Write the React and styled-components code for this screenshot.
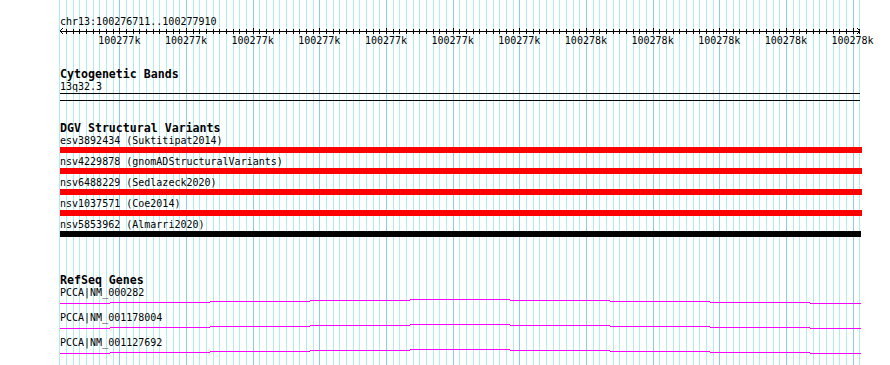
import styled, { createGlobalStyle } from 'styled-components';

const START = 100276711;
const END = 100277910;
const LEFT = 60;
const WIDTH = 800;
const PX_PER_BP = WIDTH / (END - START + 1);

const pxOf = (bp) => LEFT + (bp - START) * PX_PER_BP;

const GlobalStyle = createGlobalStyle`
  html, body {
    margin: 0;
    padding: 0;
    background: #fff;
  }
`;

const Panel = styled.div`
  position: relative;
  width: 890px;
  height: 365px;
  overflow: hidden;
  background: #fff;
  font-family: "DejaVu Sans Mono", monospace;
  color: #000;
`;

const GridLayer = styled.svg`
  position: absolute;
  inset: 0;
  z-index: 0;
`;

const Tracks = styled.div`
  position: relative;
  z-index: 1;
  display: flex;
  flex-direction: column;
  width: ${WIDTH}px;
  padding: 15px 0 0 ${LEFT}px;
`;

const Caption = styled.div`
  font-size: 10px;
  line-height: 13px;
  white-space: pre;
`;

const RulerSvg = styled.svg`
  display: block;
  overflow: visible;
`;

const TickLabels = styled.div`
  display: flex;
  padding-left: ${(p) => p.$offset}px;
`;

const TickLabel = styled.div`
  flex: none;
  width: ${(p) => p.$step}px;
  text-align: center;
  font-size: 10px;
  line-height: 13px;
`;

const Track = styled.section`
  display: flex;
  flex-direction: column;
  margin-top: ${(p) => p.$spacing}px;
`;

const TrackTitle = styled.div`
  font-size: 11.6px;
  font-weight: bold;
  line-height: 12px;
  white-space: pre;
`;

const FeatureLabel = styled.div`
  font-size: 10px;
  line-height: 13px;
  white-space: pre;
`;

const Band = styled.div`
  width: ${WIDTH}px;
  height: 6px;
  border-top: 1px solid #000;
  border-bottom: 1px solid #000;
`;

const VariantList = styled.div`
  display: flex;
  flex-direction: column;
  gap: 2px;
`;

const VariantBar = styled.div`
  width: ${(p) => p.$width}px;
  height: 6px;
  background: ${(p) => p.$color};
`;

const GeneSvg = styled.svg`
  display: block;
  overflow: visible;
`;

const minorBps = [];
for (let bp = START - 1; bp <= END; bp += 10) minorBps.push(bp);

const majorBps = [];
for (let bp = Math.ceil(START / 100) * 100; bp <= END; bp += 100) majorBps.push(bp);

const variants = [
  { id: 'esv3892434', study: 'Suktitipat2014', color: '#ff0000', width: 802 },
  { id: 'nsv4229878', study: 'gnomADStructuralVariants', color: '#ff0000', width: 802 },
  { id: 'nsv6488229', study: 'Sedlazeck2020', color: '#ff0000', width: 802 },
  { id: 'nsv1037571', study: 'Coe2014', color: '#ff0000', width: 802 },
  { id: 'nsv5853962', study: 'Almarri2020', color: '#000000', width: 801 },
];

const transcripts = ['PCCA|NM_000282', 'PCCA|NM_001178004', 'PCCA|NM_001127692'];

// stepped transcript line: x breaks and 1px drops from the peak
const geneSteps = [
  [60, 110, 4],
  [110, 210, 3],
  [210, 310, 2],
  [310, 410, 1],
  [410, 510, 0],
  [510, 610, 1],
  [610, 710, 2],
  [710, 810, 3],
  [810, 861, 4],
];

const Grid = () => (
  <GridLayer width="890" height="365" shapeRendering="crispEdges">
    {minorBps.map((bp) => (
      <rect
        key={bp}
        x={Math.round(pxOf(bp))}
        y="0"
        width="1"
        height="365"
        fill={bp % 100 === 0 ? '#8ccbea' : '#aeeeee'}
      />
    ))}
  </GridLayer>
);

const Ruler = () => {
  const ticks = minorBps.filter((bp) => bp >= START);
  return (
    <>
      <Caption>chr13:100276711..100277910</Caption>
      <RulerSvg width={WIDTH} height="6" shapeRendering="crispEdges">
        <rect x="0" y="3" width={WIDTH} height="1" fill="#000" />
        {ticks.map((bp) => {
          const major = bp % 100 === 0;
          return (
            <rect
              key={bp}
              x={Math.round(pxOf(bp)) - LEFT}
              y={major ? 0 : 1}
              width="1"
              height={major ? 6 : 5}
              fill="#000"
            />
          );
        })}
        <polyline points="3,0 0,3 3,6" fill="none" stroke="#000" strokeWidth="1" />
        <polyline points="797,0 800,3 797,6" fill="none" stroke="#000" strokeWidth="1" />
      </RulerSvg>
      <TickLabels $offset={pxOf(majorBps[0]) - LEFT - 50 * PX_PER_BP}>
        {majorBps.map((bp) => (
          <TickLabel key={bp} $step={100 * PX_PER_BP}>
            {Math.round(bp / 1000)}k
          </TickLabel>
        ))}
      </TickLabels>
    </>
  );
};

const GeneLine = () => (
  <GeneSvg width={WIDTH} height="12" shapeRendering="crispEdges">
    {geneSteps.map(([x1, x2, dy]) => (
      <rect key={x1} x={x1 - LEFT} y={dy} width={x2 - x1} height="1" fill="#ff00ff" />
    ))}
  </GeneSvg>
);

export default function App() {
  return (
    <>
      <GlobalStyle />
      <Panel>
        <Grid />
        <Tracks>
          <Ruler />

          <Track $spacing={21}>
            <TrackTitle>Cytogenetic Bands</TrackTitle>
            <FeatureLabel>13q32.3</FeatureLabel>
            <Band />
          </Track>

          <Track $spacing={21}>
            <TrackTitle>DGV Structural Variants</TrackTitle>
            <VariantList>
              {variants.map((v) => (
                <div key={v.id}>
                  <FeatureLabel>
                    {v.id} ({v.study})
                  </FeatureLabel>
                  <VariantBar $color={v.color} $width={v.width} />
                </div>
              ))}
            </VariantList>
          </Track>

          <Track $spacing={37}>
            <TrackTitle>RefSeq Genes</TrackTitle>
            {transcripts.map((t) => (
              <div key={t}>
                <FeatureLabel>{t}</FeatureLabel>
                <GeneLine />
              </div>
            ))}
          </Track>
        </Tracks>
      </Panel>
    </>
  );
}
